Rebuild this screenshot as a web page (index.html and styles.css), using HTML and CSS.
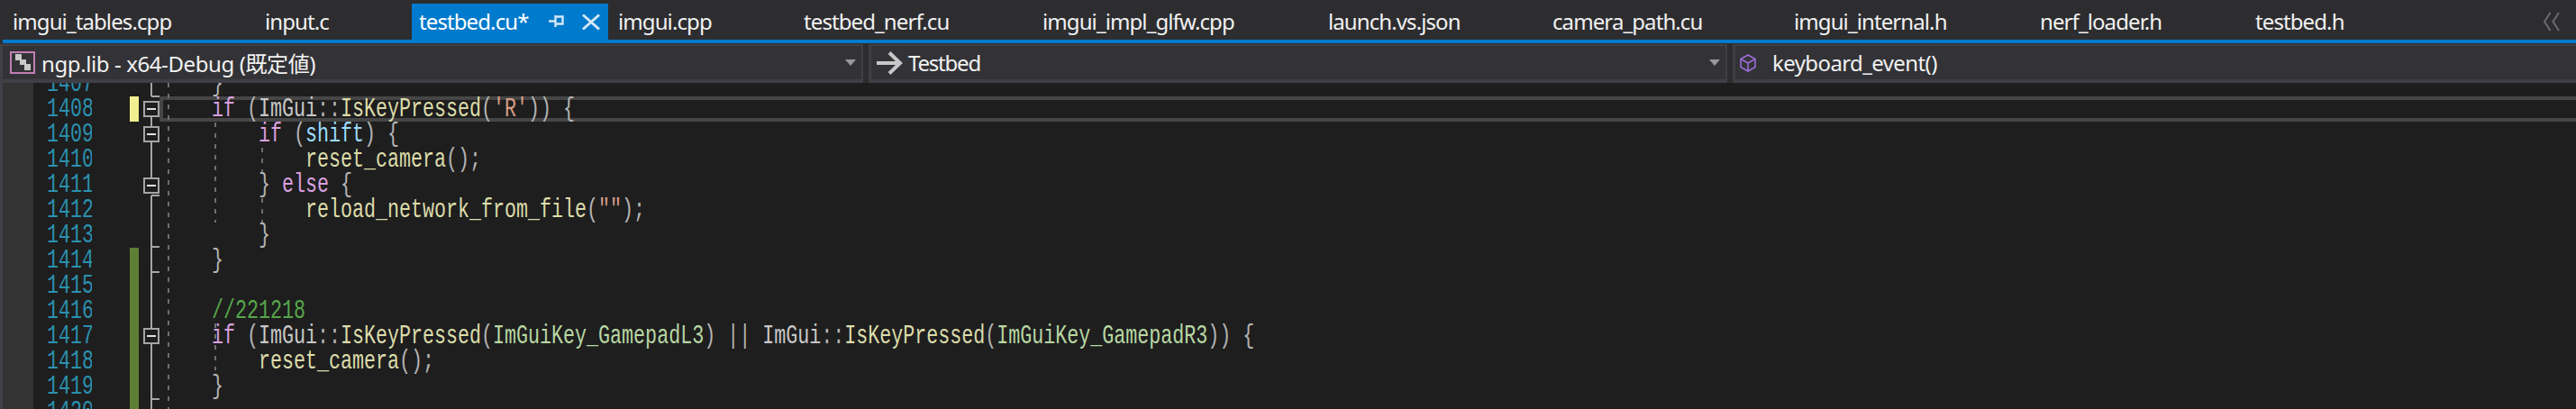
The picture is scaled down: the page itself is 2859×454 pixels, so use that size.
FILE: index.html
```html
<!DOCTYPE html>
<html lang="ja">
<head>
<meta charset="utf-8">
<title>testbed.cu</title>
<link rel="stylesheet" href="styles.css">
</head>
<body>
<div class="tabbar">
  <div class="tabs">
    <div class="tab"><span class="tab-label">imgui_tables.cpp</span></div>
    <div class="tab"><span class="tab-label">input.c</span></div>
    <div class="tab active"><span class="tab-label">testbed.cu*</span>
      <svg class="pin" width="20" height="16" viewBox="0 0 20 16"><path d="M0 7.5H7M7.5 1V14M7.5 2.5H15.5V10.5H7.5" fill="none" stroke="#d3e8f6" stroke-width="2.4"/></svg>
      <svg class="close" width="22" height="19" viewBox="0 0 22 19"><path d="M2 1.500L20 17.500M20 1.500L2 17.500" fill="none" stroke="#d3e8f6" stroke-width="3"/></svg>
    </div>
    <div class="tab"><span class="tab-label">imgui.cpp</span></div>
    <div class="tab"><span class="tab-label">testbed_nerf.cu</span></div>
    <div class="tab"><span class="tab-label">imgui_impl_glfw.cpp</span></div>
    <div class="tab"><span class="tab-label">launch.vs.json</span></div>
    <div class="tab"><span class="tab-label">camera_path.cu</span></div>
    <div class="tab"><span class="tab-label">imgui_internal.h</span></div>
    <div class="tab"><span class="tab-label">nerf_loader.h</span></div>
    <div class="tab"><span class="tab-label">testbed.h</span></div>
  </div>
  <svg class="overflow" width="20" height="22" viewBox="0 0 20 22"><path d="M8.500 1L2 11L8.500 21M18 1L11.500 11L18 21" fill="none" stroke="#6c6c70" stroke-width="2"/></svg>
</div>
<div class="accent"></div>
<div class="navbar">
  <div class="combo combo-project">
    <svg class="icon-project" width="28" height="25" viewBox="0 0 28 25"><rect x="1" y="1" width="26" height="23" fill="none" stroke="#c27fb4" stroke-width="2"/><path d="M6 3H13V9H18V14H23V21H16V15H11V10H6Z" fill="#c8c8c8"/></svg>
    <span class="combo-label label-project">ngp.lib - x64-Debug (既定値)</span>
    <span class="caret"></span>
  </div>
  <div class="combo combo-scope">
    <svg class="icon-arrow" width="29" height="26" viewBox="0 0 29 26"><path d="M0 13H26M14 1.500L26 13L14 24.500" fill="none" stroke="#c8c8c8" stroke-width="4"/></svg>
    <span class="combo-label label-scope">Testbed</span>
    <span class="caret"></span>
  </div>
  <div class="combo combo-member">
    <svg class="icon-cube" width="18" height="20" viewBox="0 0 18 20"><path d="M9 1L17 5.500V14.500L9 19L1 14.500V5.500ZM1 5.500L9 10L17 5.500M9 10V19" fill="none" stroke="#9a6dd7" stroke-width="1.600"/></svg>
    <span class="combo-label">keyboard_event()</span>
  </div>
</div>
<div class="editor">
  <div class="glyph-margin"></div>
  <div class="numbers">
    <div class="scaled">
      <div class="ln">1407</div><div class="ln">1408</div><div class="ln">1409</div><div class="ln">1410</div><div class="ln">1411</div><div class="ln">1412</div><div class="ln">1413</div><div class="ln">1414</div><div class="ln">1415</div><div class="ln">1416</div><div class="ln">1417</div><div class="ln">1418</div><div class="ln">1419</div><div class="ln">1420</div>
    </div>
  </div>
  <div class="changes"><div class="mark-saved"></div><div class="mark-none"></div><div class="mark-new"></div></div>
  <svg class="folds" width="23" height="362" viewBox="0 0 23 362">
    <path d="M14 0V15M14 15H23M14 38V48M14 66V105M14 125H23M14 125V182M14 182H23M14 182V210M14 210H23M14 210V272M14 290V351M14 351H23M14 351V362" fill="none" stroke="#a5a5a5" stroke-width="2"/>
    <g fill="#1e1e1e" stroke="#a5a5a5" stroke-width="2">
      <rect x="6" y="21" width="16" height="16"/>
      <rect x="6" y="49" width="16" height="16"/>
      <rect x="6" y="106" width="16" height="16"/>
      <rect x="6" y="273" width="16" height="16"/>
    </g>
    <path d="M9 29H19M9 57H19M9 114H19M9 281H19" stroke="#e0e0e0" stroke-width="2"/>
  </svg>
  <div class="code">
    <div class="current-line"></div>
    <svg class="guides" width="140" height="362" viewBox="0 0 140 362">
      <g fill="none" stroke="#6e6e6e" stroke-width="2" stroke-dasharray="5 7">
        <path d="M10 0V362"/>
        <path d="M62 44V155M62 267V319"/>
        <path d="M114 72V99M114 128V155"/>
      </g>
    </svg>
    <div class="scaled code-text">
<div class="ln"><span class="p">    }</span></div>
<div class="ln"><span class="k">    if</span> <span class="p">(</span><span class="t">ImGui</span><span class="p">::</span><span class="f">IsKeyPressed</span><span class="p">(</span><span class="s">'R'</span><span class="p">)) {</span></div>
<div class="ln"><span class="k">        if</span> <span class="p">(</span><span class="v">shift</span><span class="p">) {</span></div>
<div class="ln">            <span class="f">reset_camera</span><span class="p">();</span></div>
<div class="ln"><span class="p">        } </span><span class="k">else</span><span class="p"> {</span></div>
<div class="ln">            <span class="f">reload_network_from_file</span><span class="p">(</span><span class="s">""</span><span class="p">);</span></div>
<div class="ln"><span class="p">        }</span></div>
<div class="ln"><span class="p">    }</span></div>
<div class="ln"></div>
<div class="ln"><span class="c">    //221218</span></div>
<div class="ln"><span class="k">    if</span> <span class="p">(</span><span class="t">ImGui</span><span class="p">::</span><span class="f">IsKeyPressed</span><span class="p">(</span><span class="e">ImGuiKey_GamepadL3</span><span class="p">) || </span><span class="t">ImGui</span><span class="p">::</span><span class="f">IsKeyPressed</span><span class="p">(</span><span class="e">ImGuiKey_GamepadR3</span><span class="p">)) {</span></div>
<div class="ln">        <span class="f">reset_camera</span><span class="p">();</span></div>
<div class="ln"><span class="p">    }</span></div>
<div class="ln"></div>
    </div>
  </div>
</div>
</body>
</html>
```
FILE: styles.css
```css
* { box-sizing: border-box; }
html, body { margin: 0; padding: 0; }
body {
  width: 2859px;
  height: 454px;
  overflow: hidden;
  background: #2d2d30;
  color: #f1f1f1;
  font-family: "Noto Sans", "Noto Sans CJK JP", sans-serif;
  font-size: 24px;
}
.tabbar {
  display: flex;
  height: 44px;
  padding: 4px 17px 0 3px;
  align-items: stretch;
}
.tabs {
  flex: 1;
  display: grid;
  grid-template-columns: 280px 174px 218px 206px 265px 317px 249px 268px 273px 239px 1fr;
}
.tab {
  display: flex;
  align-items: center;
  padding-left: 11px;
  position: relative;
  white-space: nowrap;
}
.tab-label { letter-spacing: -0.9px; line-height: 40px; }
.tab.active { background: #007acc; padding-left: 8px; color: #fff; }
.pin { margin-left: 22px; }
.close { margin-left: 16px; }
.overflow { align-self: center; }
.accent { height: 4px; margin-left: 3px; background: #007acc; }
.navbar {
  display: flex;
  height: 44px;
  padding: 1px 0 0 0;
  background: #2d2d30;
  gap: 6px;
}
.combo {
  display: flex;
  align-items: center;
  height: 43px;
  background: #333337;
  border: solid #3f3f46;
  border-width: 2px 2px 4px 3px;
  position: relative;
  white-space: nowrap;
}
.combo-project { width: 958px; }
.combo-scope { width: 953px; }
.combo-member { flex: 1; border-right: 0; }
.combo-label { letter-spacing: -0.6px; }
.label-project { letter-spacing: -0.4px; }
.label-scope { letter-spacing: -1.2px; }
.icon-project { margin-left: 8px; margin-right: 7px; }
.icon-arrow { margin-left: 6px; margin-right: 6px; }
.icon-cube { margin-left: 5px; margin-right: 18px; }
.caret {
  margin-left: auto;
  margin-right: 6px;
  width: 0;
  height: 0;
  border: solid transparent;
  border-width: 7px 6px 0;
  border-top-color: #999;
}
.editor {
  display: flex;
  height: 362px;
  background: #1e1e1e;
  overflow: hidden;
}
.glyph-margin {
  width: 37px;
  flex: none;
  background: #333333;
  border-left: 3px solid #3f3f46;
}
.numbers {
  width: 65px;
  flex: none;
  padding-left: 15px;
  color: #2b91af;
  overflow: hidden;
}
.scaled {
  margin-top: -13px;
  font-family: "Liberation Mono", monospace;
  font-size: 30px;
  transform: scaleX(0.7222);
  transform-origin: 0 0;
}
.ln { height: 28px; line-height: 28px; white-space: pre; }
.changes {
  width: 10px;
  flex: none;
  margin-left: 42px;
  display: flex;
  flex-direction: column;
}
.mark-saved { height: 28px; margin-top: 15px; background: #efef91; }
.mark-none { height: 140px; }
.mark-new { flex: 1; background: #5d7e34; }
.folds { flex: none; display: block; }
.code {
  flex: 1;
  position: relative;
  overflow: hidden;
  padding-left: 6px;
}
.current-line {
  position: absolute;
  left: 0;
  right: -8px;
  top: 15px;
  height: 28px;
  border: 4px solid #464646;
}
.guides { position: absolute; left: 0; top: 0; }
.code-text { position: relative; width: 2000px; }
.k { color: #d8a0df; }
.p { color: #b4b4b4; }
.t { color: #c8c8c8; }
.f { color: #dcdcaa; }
.s { color: #d69d85; }
.v { color: #9cdcfe; }
.e { color: #b8d7a3; }
.c { color: #57a64a; }
```
